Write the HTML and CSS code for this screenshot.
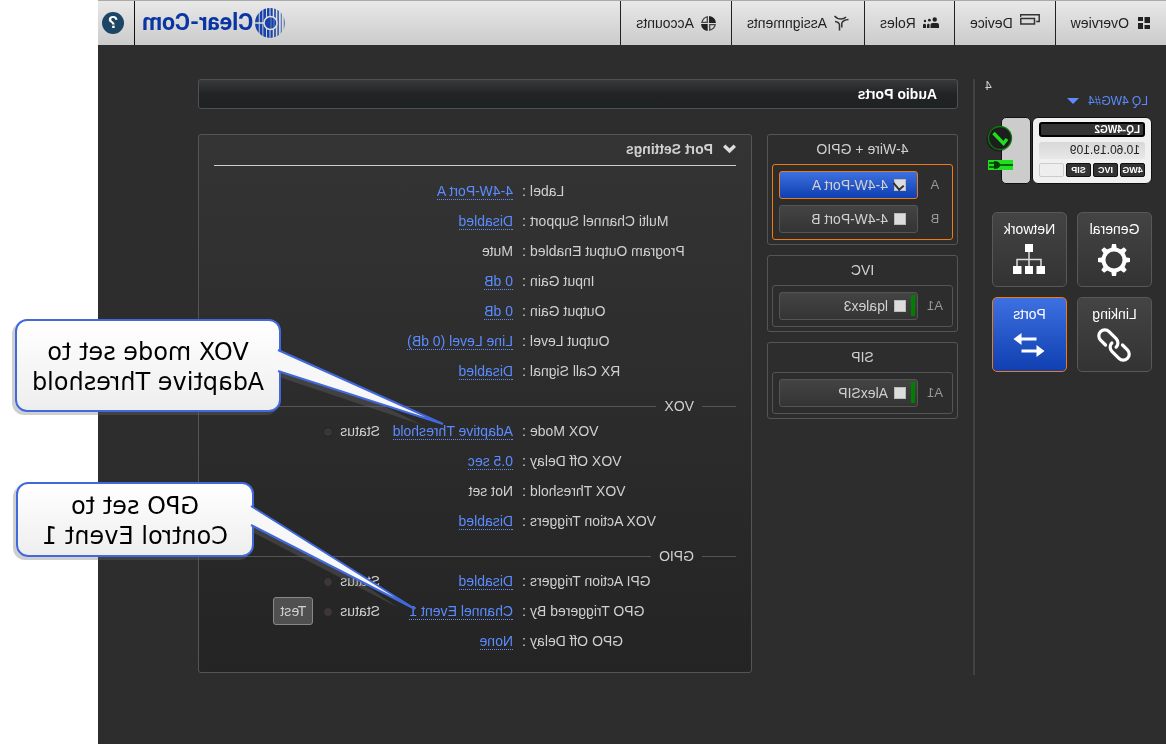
FILE: index.html
```html
<!DOCTYPE html>
<html lang="en">
<head>
<meta charset="utf-8">
<title>Audio Ports</title>
<link rel="stylesheet" href="styles.css">
</head>
<body>
<div class="page">
  <div class="app">
    <header class="topbar">
      <nav class="nav">
        <a class="nav-item" href="#"><svg width="15" height="13" viewBox="0 0 15 13"><path fill="#222" d="M1 0h5.500v6H1zM1 8h5.500v4H1zM8 0h5v4H8zM8 6h5v6H8z"/></svg>Overview</a>
        <a class="nav-item" href="#"><svg class="icon-raised" width="20" height="12" viewBox="0 0 20 12"><path fill="none" stroke="#333" stroke-width="1.500" d="M19.400 3V.8H.8v6.700h3M5.500 4.500h13.700v5.500H5.500z"/></svg>Device</a>
        <a class="nav-item" href="#"><svg width="16" height="12" viewBox="0 0 16 12"><g fill="#222"><circle cx="4.300" cy="2.500" r="2.200"/><path d="M0 11V8q0-2 2-2h4.500q2 0 2 2v3z"/><circle cx="9.600" cy="3.200" r="1.400"/><circle cx="14" cy="4" r="1.200"/><path d="M9.500 11V7q2-1 2.500 1v3zM13 11V7.500q2.500-1.500 3 .5v3z"/></g></svg>Roles</a>
        <a class="nav-item" href="#"><svg width="15" height="16" viewBox="0 0 15 16"><path fill="none" stroke="#333" stroke-width="1.500" d="M.5 4.500Q6 5 7.200 8v4.500M14.500 1Q12 4 8 4Q5 4 3 2M9.500 15.500V10Q10 7 14 6.500"/></svg>Assignments</a>
        <a class="nav-item" href="#"><svg width="15" height="15" viewBox="0 0 15 15"><path fill="#222" d="M7 0v7H0Q.5 1 7 0zM15 8Q14.500 14 8.300 15V8z"/><path fill="none" stroke="#444" stroke-width="1.300" d="M8.700.8v5.500h5.400Q13 1.500 8.700.8zM.9 8.700h5.400v5.400Q1.500 13 .9 8.700z"/></svg>Accounts</a>
      </nav>
      <div class="brand">
        <svg width="31" height="32" viewBox="0 0 31 32">
          <defs><clipPath id="globe"><circle cx="16" cy="16" r="15"/></clipPath></defs>
          <g clip-path="url(#globe)" fill="#1743a8">
            <path opacity=".6" d="M1 0h1.300v32H1zM4 0h1.300v32H4z"/>
            <path opacity=".8" d="M7 0h1.700v32H7zM10 0h2v32h-2z"/>
            <path d="M13.300 0h2.200v32h-2.200zM16.500 0h2.500v32h-2.500zM20 0h2.700v32H20zM23.600 0h2.700v32h-2.700zM27.200 0h4v32h-4z"/>
            <path fill="#dedede" d="M21 15.200h10v1.600H21z"/>
          </g>
          <circle cx="15.500" cy="16" r="6.500" fill="#1743a8" stroke="#dedede" stroke-width="1.500"/>
          <path fill="#dedede" opacity=".4" d="M11.500 11h1v10h-1zM14.500 10h1v12h-1z"/>
        </svg>
        <span class="brand-name">Clear-Com</span>
      </div>
      <div class="help-cell"><button class="help" aria-label="Help">?</button></div>
    </header>

    <div class="body">
      <aside class="sidebar">
        <div class="unit-number">4</div>
        <button class="device-name">LQ 4WG#4<span class="caret"></span></button>
        <div class="device">
          <div class="device-card">
            <div class="device-id">LQ-4WG2</div>
            <div class="device-ip">10.60.19.109</div>
            <div class="tags"><span class="tag">4WG</span><span class="tag">IVC</span><span class="tag">SIP</span><span class="tag tag-empty"></span></div>
          </div>
          <div class="device-side">
            <svg class="state" width="28" height="56" viewBox="0 0 28 56">
              <circle cx="15" cy="15" r="12.500" fill="#000" opacity=".35"/>
              <circle cx="14" cy="14" r="11.500" fill="#1d1d1d" stroke="#0b7a10" stroke-width="1.300"/>
              <path fill="none" stroke="#1fe01f" stroke-width="3.400" d="M7 15l3.500 4.500L20.500 9"/>
              <path fill="#1fe01f" d="M1 36h25v10H1z"/>
              <path fill="none" stroke="#0a3a0a" stroke-width="1.500" d="M1 41h15M20 39h5M20 43h5"/>
              <path fill="#0a3a0a" d="M14 40q1-3 6-3v8q-5 0-6-3z"/>
            </svg>
          </div>
        </div>
        <div class="tiles">
          <a class="tile" href="#">General
            <svg width="34" height="34" viewBox="0 0 34 34"><g fill="#fff"><path id="tooth" d="M14 7l1-6h4l1 6zM14 27l1 6h4l1-6z"/><use href="#tooth" transform="rotate(45 17 17)"/><use href="#tooth" transform="rotate(90 17 17)"/><use href="#tooth" transform="rotate(135 17 17)"/></g><circle cx="17" cy="17" r="10.500" fill="none" stroke="#fff" stroke-width="4"/></svg></a>
          <a class="tile" href="#">Network
            <svg width="34" height="34" viewBox="0 0 34 34"><path fill="#fff" d="M13 1h8v8h-8zM1 23h8.500v8H1zM13 23h8v8h-8zM24.500 23H33v8h-8.500z"/><path fill="none" stroke="#ddd" stroke-width="1.500" d="M17 9v14M5 23v-6.500h24V23"/></svg></a>
          <a class="tile" href="#">Linking
            <svg width="34" height="34" viewBox="0 0 34 34"><g fill="none" stroke="#fff" stroke-width="3.200" stroke-linecap="round" transform="translate(17 17) rotate(-45)"><path id="link" d="M-6-6h-7a6 6 0 0 0 0 12h10a6 6 0 0 0 6-6"/><use href="#link" transform="rotate(180)"/></g></svg></a>
          <a class="tile tile-active" href="#">Ports
            <svg width="34" height="34" viewBox="0 0 34 34"><path fill="#fff" d="M9.500 9.500h15V5l8 6-8 6v-4.500h-15zM24.500 21.500h-15V17l-8 6 8 6v-4.500h15z"/></svg></a>
        </div>
      </aside>

      <main class="main">
        <h1 class="title">Audio Ports</h1>
        <div class="columns">
          <div class="ports">
            <section class="group">
              <h2 class="group-title">4-Wire + GPIO</h2>
              <div class="group-box group-box-active">
                <div class="port"><span class="slot">A</span><label class="port-name port-selected"><input class="check" type="checkbox" checked>4-4W-Port A</label></div>
                <div class="port"><span class="slot">B</span><label class="port-name"><input class="check" type="checkbox">4-4W-Port B</label></div>
              </div>
            </section>
            <section class="group">
              <h2 class="group-title">IVC</h2>
              <div class="group-box">
                <div class="port"><span class="slot">A1</span><label class="port-name port-online"><input class="check" type="checkbox">lqalex3</label></div>
              </div>
            </section>
            <section class="group">
              <h2 class="group-title">SIP</h2>
              <div class="group-box">
                <div class="port"><span class="slot">A1</span><label class="port-name port-online"><input class="check" type="checkbox">AlexSIP</label></div>
              </div>
            </section>
          </div>

          <section class="settings">
            <h2 class="settings-title"><svg width="13" height="10" viewBox="0 0 13 10"><path fill="none" stroke="#ddd" stroke-width="3.400" d="M1.200 1.700l5.300 5.100 5.300-5.100"/></svg>Port Settings</h2>
            <div class="row"><span class="name">Label</span><span class="colon">:</span><span><a class="value" href="#">4-4W-Port A</a></span></div>
            <div class="row"><span class="name">Multi Channel Support</span><span class="colon">:</span><span><a class="value" href="#">Disabled</a></span></div>
            <div class="row"><span class="name">Program Output Enabled</span><span class="colon">:</span><span>Mute</span></div>
            <div class="row"><span class="name">Input Gain</span><span class="colon">:</span><span><a class="value" href="#">0 dB</a></span></div>
            <div class="row"><span class="name">Output Gain</span><span class="colon">:</span><span><a class="value" href="#">0 dB</a></span></div>
            <div class="row"><span class="name">Output Level</span><span class="colon">:</span><span><a class="value" href="#">Line Level (0 dB)</a></span></div>
            <div class="row"><span class="name">RX Call Signal</span><span class="colon">:</span><span><a class="value" href="#">Disabled</a></span></div>
            <h3 class="divider">VOX</h3>
            <div class="row"><span class="name">VOX Mode</span><span class="colon">:</span><span><a class="value" href="#">Adaptive Threshold</a></span><span class="status">Status<i class="led"></i></span></div>
            <div class="row"><span class="name">VOX Off Delay</span><span class="colon">:</span><span><a class="value" href="#">0.5 sec</a></span></div>
            <div class="row"><span class="name">VOX Threshold</span><span class="colon">:</span><span>Not set</span></div>
            <div class="row"><span class="name">VOX Action Triggers</span><span class="colon">:</span><span><a class="value" href="#">Disabled</a></span></div>
            <h3 class="divider">GPIO</h3>
            <div class="row"><span class="name">GPI Action Triggers</span><span class="colon">:</span><span><a class="value" href="#">Disabled</a></span><span class="status">Status<i class="led"></i></span></div>
            <div class="row"><span class="name">GPO Triggered By</span><span class="colon">:</span><span><a class="value" href="#">Channel Event 1</a></span><span class="status">Status<i class="led"></i><button class="test">Test</button></span></div>
            <div class="row"><span class="name">GPO Off Delay</span><span class="colon">:</span><span><a class="value" href="#">None</a></span></div>
          </section>
        </div>
      </main>
    </div>
  </div>

  <div class="callout callout-vox">
    <svg class="tail" width="165" height="84" viewBox="0 0 165 84">
      <path fill="rgba(110,110,110,.33)" d="M163 5L20 76l143-48z"/>
      <path fill="#f7f7f7" d="M165 1L-1 75l166-53z"/>
      <path fill="none" stroke="#4169dc" stroke-width="2" stroke-linejoin="bevel" d="M164 1L-1 75l165-53"/>
    </svg>
    <p class="callout-text">VOX mode set to<br>Adaptive Threshold</p>
  </div>
  <div class="callout callout-gpo">
    <svg class="tail" width="165" height="114" viewBox="0 0 165 114">
      <path fill="rgba(110,110,110,.33)" d="M163 5L16 103l147-76z"/>
      <path fill="#f7f7f7" d="M165 1L0 104 165 20z"/>
      <path fill="none" stroke="#4169dc" stroke-width="2" stroke-linejoin="bevel" d="M164 1L0 104 164 20"/>
    </svg>
    <p class="callout-text">GPO set to<br>Control Event 1</p>
  </div>
</div>
</body>
</html>
```
FILE: styles.css
```css
* { box-sizing: border-box; }
body {
  margin: 0;
  background: #fff;
  font: 14px/16px "Liberation Sans", Arial, sans-serif;
  color: #d0d0d0;
}
h1, h2, h3, p { margin: 0; font-size: 14px; font-weight: normal; }
a { color: inherit; text-decoration: none; }
button { font: inherit; color: inherit; padding: 0; border: 0; background: none; cursor: pointer; }
svg { display: block; flex: none; }

/* The whole interface is presented as a mirror image. */
.page {
  position: relative;
  min-height: 100vh;
  padding-right: 98px;
  transform: scaleX(-1);
  overflow: hidden;
}
.app { min-height: 100vh; background: #2d2d2d; }

.topbar {
  display: flex;
  height: 45px;
  border-top: 1px solid #aaa;
  background: linear-gradient(#e8e8e8, #cbcbcb);
  color: #222;
}
.nav { display: flex; flex: 1; }
.nav-item {
  display: flex;
  align-items: center;
  gap: 7px;
  padding: 0 15px;
  border-right: 1px solid #222;
}
.icon-raised { margin-bottom: 6px; }
.brand { display: flex; align-items: center; gap: 2px; padding-right: 7px; }
.brand-name {
  font: bold 23px/32px Roboto, "Liberation Sans", sans-serif;
  color: #0a36a3;
}
.help-cell { display: flex; align-items: center; padding: 0 4px 0 10px; border-left: 1px solid #111; }
.help {
  width: 22px;
  height: 22px;
  border-radius: 50%;
  background: #1c4664;
  color: #fff;
  font-size: 17px;
  font-weight: bold;
}

.body { display: flex; padding: 34px 100px 40px 0; }
.sidebar {
  flex: none;
  width: 193px;
  padding-left: 14px;
  border-right: 2px solid #424242;
}
.unit-number { padding-right: 10px; font-size: 12px; line-height: 14px; text-align: right; }
.device-name {
  display: flex;
  align-items: center;
  gap: 9px;
  padding: 0 4px;
  font-size: 12px;
  line-height: 16px;
  color: #5a8cff;
}
.caret { border: 6px solid transparent; border-top-color: #5a8cff; border-bottom: 0; }
.device { display: flex; gap: 1px; margin: 8px 0 28px; }
.device-card {
  width: 120px;
  height: 67px;
  padding: 4px 6px;
  border: 1px solid #111;
  border-radius: 6px;
  background: #f0f0f0;
}
.device-id {
  height: 15px;
  padding: 0 3px;
  border: 2px solid #000;
  border-radius: 3px;
  background: #333;
  color: #fff;
  font-size: 10px;
  font-weight: bold;
  line-height: 11px;
}
.device-ip {
  height: 17px;
  margin: 5px 0 4px;
  padding: 0 5px;
  border-radius: 3px;
  background: linear-gradient(#d8d8d8, #e8e8e8);
  color: #222;
  font-size: 12px;
  line-height: 16px;
}
.tags { display: flex; gap: 2px; }
.tag {
  flex: 1;
  height: 14px;
  border: 1px solid #111;
  border-radius: 2px;
  background: #333;
  color: #fff;
  font-size: 9px;
  font-weight: bold;
  line-height: 12px;
  text-align: center;
}
.tag-empty { border-color: #ccc; background: #eee; }
.device-side {
  position: relative;
  width: 30px;
  border: 1px solid #111;
  border-radius: 5px;
  background: #ccc;
}
.state { position: absolute; left: 16px; top: 6px; }
.tiles { display: grid; grid-template-columns: 75px 75px; gap: 10px; }
.tile {
  display: flex;
  flex-direction: column;
  align-items: center;
  gap: 6px;
  height: 75px;
  padding-top: 8px;
  border: 1px solid #585858;
  border-radius: 5px;
  background: linear-gradient(#444, #333);
  color: #fff;
}
.tile-active { border-color: #f27a10; background: linear-gradient(#3d70e0, #0f3fb0); }

.main { flex: 1; padding: 0 0 2px 15px; }
.title {
  height: 30px;
  padding-left: 20px;
  border: 1px solid #505050;
  border-radius: 3px;
  background: linear-gradient(#38393a, #212324 50%, #1f2223);
  color: #fff;
  font-weight: bold;
  line-height: 28px;
}
.columns { display: flex; align-items: flex-start; gap: 15px; margin-top: 25px; }
.ports { display: grid; gap: 10px; flex: none; width: 191px; }
.group { padding: 0 4px 4px; border: 1px solid #555; border-radius: 3px; }
.group-title { line-height: 29px; text-align: center; }
.group-box {
  display: grid;
  gap: 6px;
  padding: 6px;
  border: 1px solid #555;
  border-radius: 3px;
}
.group-box-active { border-color: #f27a10; }
.port { display: flex; align-items: center; }
.slot { flex: 1; padding-right: 6px; color: #999; font-size: 13px; text-align: center; }
.port-name {
  position: relative;
  display: flex;
  align-items: center;
  gap: 6px;
  width: 139px;
  height: 28px;
  padding-left: 11px;
  border: 1px solid #555;
  border-radius: 3px;
  background: linear-gradient(#444, #343434);
}
.port-selected { border-color: #f27a10; background: linear-gradient(#3d70e0, #0f3fb0); }
.port-online::before {
  content: "";
  position: absolute;
  left: 2px;
  top: 2px;
  width: 4px;
  height: 21px;
  background: #008000;
}
.check {
  appearance: none;
  position: relative;
  width: 12px;
  height: 12px;
  margin: 0;
  border: 1px solid #bbb;
  background: #ddd;
}
.check:checked::after {
  content: "";
  position: absolute;
  left: 3px;
  top: 0;
  width: 5px;
  height: 8px;
  border: solid #333;
  border-width: 0 2px 2px 0;
  transform: rotate(40deg);
}

.settings {
  flex: 1;
  padding: 0 15px 16px;
  border: 1px solid #555;
  border-radius: 3px;
  background: linear-gradient(#343434, #242424);
}
.settings-title {
  display: flex;
  align-items: center;
  gap: 10px;
  height: 31px;
  margin-bottom: 10px;
  padding-bottom: 2px;
  border-bottom: 1px solid #ccc;
  font-weight: bold;
}
.row {
  display: grid;
  grid-template-columns: 206px 17px 133px 1fr;
  align-items: center;
  height: 30px;
}
.name { text-align: right; }
.colon { padding-left: 4px; }
.value { border-bottom: 1px dotted #5a8cff; color: #5a8cff; }
.status { display: flex; align-items: center; }
.led {
  flex: none;
  width: 10px;
  height: 10px;
  margin: 2px 0 0 7px;
  border: 1px solid #262424;
  border-radius: 50%;
  background: #3c3636;
}
.test {
  width: 40px;
  height: 28px;
  margin-left: 10px;
  border: 1px solid #888;
  border-radius: 3px;
  background: #505050;
}
.divider {
  display: flex;
  align-items: center;
  gap: 8px;
  height: 30px;
  padding-top: 10px;
}
.divider::before, .divider::after { content: ""; width: 34px; height: 1px; background: #555; }
.divider::after { flex: 1; }

.callout {
  position: absolute;
  display: flex;
  align-items: center;
  justify-content: center;
  padding-top: 2px;
  border: 2px solid #4169dc;
  border-radius: 12px;
  background: linear-gradient(#fff, #eee);
  box-shadow: 3px 3px 0 rgba(110, 110, 110, .33);
}
.callout-vox { right: 15px; top: 319px; width: 266px; height: 93px; }
.callout-gpo { right: 16px; top: 482px; width: 238px; height: 75px; }
.callout-text {
  color: #000;
  font: 24px/30px "DejaVu Sans", Verdana, sans-serif;
  text-align: center;
}
.tail { position: absolute; right: 100%; margin-right: -2px; overflow: visible; }
.callout-vox .tail { top: 28px; }
.callout-gpo .tail { top: 21px; }
```
